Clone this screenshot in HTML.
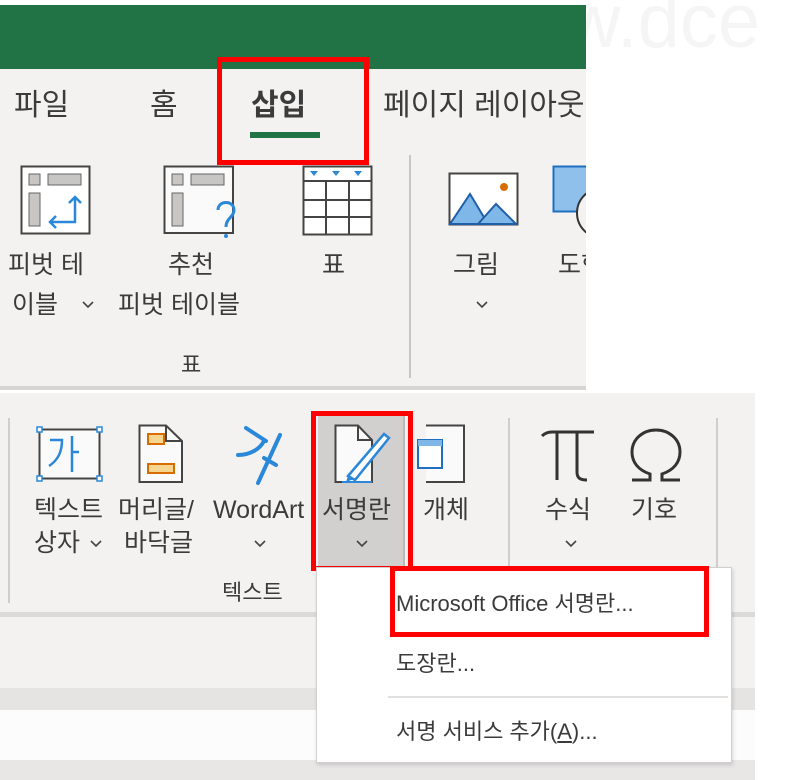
<!DOCTYPE html>
<html><head><meta charset="utf-8"><style>
*{margin:0;padding:0;box-sizing:border-box}
html,body{width:796px;height:780px;overflow:hidden}
body{background:#fff;position:relative;font-family:"Liberation Sans","Noto Sans CJK KR","NanumGothic",sans-serif;color:#3b3b3b}
.a{position:absolute}
.t{position:absolute;white-space:nowrap;font-size:25px;line-height:30px}
.red{position:absolute;border:5px solid #f00}
svg{position:absolute;overflow:visible}
.ch{position:absolute;width:12px;height:8px}
</style></head><body>
<div class="a" style="left:586px;top:0;width:210px;height:60px;overflow:hidden"><div class="a" style="left:-130px;top:-22px;font-size:76px;color:#f5f5f5">www.dce</div></div>
<!-- top screenshot -->
<div class="a" style="left:0;top:5px;width:586px;height:64px;background:#217346"></div>
<div class="a" style="left:0;top:69px;width:586px;height:320px;background:#f3f2f1"></div>
<div class="a" style="left:0;top:386px;width:586px;height:4px;background:#d6d5d4"></div>
<div class="t" style="left:14px;top:88px;font-size:30px;line-height:36px">파일</div>
<div class="t" style="left:150px;top:88px;font-size:30px;line-height:36px">홈</div>
<div class="t" style="left:251px;top:88px;font-size:30px;line-height:36px;font-weight:bold">삽입</div>
<div class="a" style="left:250px;top:132px;width:70px;height:6px;background:#217346"></div>
<div class="a" style="left:383px;top:88px;width:203px;height:40px;overflow:hidden"><div class="t" style="left:0;top:0;font-size:30px;line-height:36px">페이지 레이아웃</div></div>
<div class="red" style="left:217px;top:57px;width:152px;height:108px"></div>
<div class="a" style="left:409px;top:155px;width:2px;height:223px;background:#c8c6c4"></div>
<svg style="left:20px;top:165px" width="72" height="70"><rect x="1.5" y="1.5" width="68" height="67" fill="#fff" stroke="#444" stroke-width="2"/><rect x="9" y="9" width="11" height="11" fill="#c8c6c4" stroke="#666"/><rect x="28" y="9" width="33" height="11" fill="#c8c6c4" stroke="#666"/><rect x="9" y="28" width="11" height="33" fill="#c8c6c4" stroke="#666"/><path d="M55 32v25H30M49 38l6-6 6 6M36 51l-6 6 6 6" fill="none" stroke="#2b88d8" stroke-width="2.5"/></svg>
<svg style="left:163px;top:165px" width="80" height="75"><path d="M1.5 1.5H70V68H1.5Z" fill="#fafafa" stroke="#444" stroke-width="2"/><rect x="9" y="9" width="11" height="11" fill="#c8c6c4" stroke="#666"/><rect x="28" y="9" width="33" height="11" fill="#c8c6c4" stroke="#666"/><rect x="9" y="28" width="11" height="33" fill="#c8c6c4" stroke="#666"/><path d="M55 45c0-10 16-10 16 0 0 7-8 8-8 17" fill="none" stroke="#2b88d8" stroke-width="3"/><circle cx="63" cy="71" r="2" fill="#2b88d8"/></svg>
<svg style="left:302px;top:165px" width="72" height="72"><rect x="1.5" y="1.5" width="68" height="68" fill="#fff" stroke="#444" stroke-width="2"/><path d="M1 16H70M1 35H70M1 52H70M24 16V70M47 16V70" stroke="#444" stroke-width="2"/><path d="M8 6h8l-4 5zM30 6h8l-4 5zM52 6h8l-4 5z" fill="#2b88d8"/></svg>
<svg style="left:448px;top:172px" width="72" height="54"><rect x="1.5" y="1.5" width="68" height="51" fill="#fff" stroke="#444" stroke-width="2"/><path d="M2 52L22 22 40 52Z" fill="#7fb7e8" stroke="#1f5fa8" stroke-width="2"/><path d="M30 52L48 32 68 52Z" fill="#7fb7e8" stroke="#1f5fa8" stroke-width="2"/><circle cx="56" cy="15" r="4" fill="#d86c00"/></svg>
<div class="a" style="left:552px;top:160px;width:34px;height:80px;overflow:hidden"><svg style="left:0;top:5px" width="34" height="60"><rect x="1.5" y="1.5" width="40" height="45" fill="#8fc0ec" stroke="#1f6fc0" stroke-width="2"/><circle cx="50" cy="48" r="25" fill="#f3f2f1" stroke="#333" stroke-width="2"/></svg></div>
<div class="t" style="left:8px;top:250px">피벗 테</div>
<div class="t" style="left:12px;top:290px">이블</div>
<svg class="ch" style="left:82px;top:301px"><path d="M1 1l5 5 5-5" fill="none" stroke="#444" stroke-width="1.6"/></svg>
<div class="t" style="left:168px;top:250px">추천</div>
<div class="t" style="left:118px;top:290px">피벗 테이블</div>
<div class="t" style="left:322px;top:250px">표</div>
<div class="t" style="left:181px;top:350px;font-size:22px">표</div>
<div class="t" style="left:453px;top:250px">그림</div>
<svg class="ch" style="left:476px;top:301px"><path d="M1 1l5 5 5-5" fill="none" stroke="#444" stroke-width="1.6"/></svg>
<div class="a" style="left:558px;top:250px;width:28px;height:32px;overflow:hidden"><div class="t" style="left:0;top:0">도형</div></div>
<!-- bottom screenshot -->
<div class="a" style="left:0;top:393px;width:755px;height:222px;background:#f3f2f1"></div>
<div class="a" style="left:0;top:612px;width:755px;height:5px;background:#dcdad8"></div>
<div class="a" style="left:0;top:617px;width:755px;height:71px;background:#f3f2f1"></div>
<div class="a" style="left:0;top:688px;width:755px;height:22px;background:#e5e4e3"></div>
<div class="a" style="left:0;top:710px;width:755px;height:50px;background:#fcfcfc"></div>
<div class="a" style="left:0;top:760px;width:755px;height:20px;background:#e8e7e6"></div>
<div class="a" style="left:8px;top:418px;width:2px;height:185px;background:#d0cecc"></div>
<div class="a" style="left:508px;top:418px;width:2px;height:150px;background:#d0cecc"></div>
<div class="a" style="left:716px;top:418px;width:2px;height:150px;background:#d0cecc"></div>
<div class="a" style="left:318px;top:415px;width:87px;height:152px;background:#d2d0ce"></div>
<div class="a" style="left:403px;top:415px;width:2px;height:152px;background:#bcbab8"></div>
<svg style="left:38px;top:428px" width="64" height="72"><rect x="1.5" y="1.5" width="60" height="49" fill="#fafafa" stroke="#444" stroke-width="2"/><g fill="#fff" stroke="#2b88d8" stroke-width="1.5"><rect x="-1" y="-1" width="5" height="5"/><rect x="59" y="-1" width="5" height="5"/><rect x="-1" y="48" width="5" height="5"/><rect x="59" y="48" width="5" height="5"/></g><path d="M12 12h12c0 12-4 20-13 26M34 8v36M34 24h7" fill="none" stroke="#2b88d8" stroke-width="2.5"/></svg>
<svg style="left:138px;top:424px" width="46" height="60"><path d="M1.5 1.5H28L44 17V58H1.5Z" fill="#fafafa" stroke="#444" stroke-width="2"/><path d="M28 1.5V17H44" fill="none" stroke="#444" stroke-width="2"/><rect x="10" y="10" width="16" height="10" fill="#f6d58e" stroke="#d86c00" stroke-width="2"/><rect x="10" y="40" width="26" height="9" fill="#f6d58e" stroke="#d86c00" stroke-width="2"/></svg>
<svg style="left:234px;top:425px" width="56" height="60"><path d="M4 30c12 0 22-6 26-14M12 3l20 13M46 10L24 58M30 33l12 7" fill="none" stroke="#2b88d8" stroke-width="4" stroke-linecap="round"/></svg>
<svg style="left:334px;top:424px" width="60" height="60"><path d="M1.5 1.5H24L38 16V58H1.5Z" fill="#fafafa" stroke="#444" stroke-width="2"/><path d="M24 1.5V16H38" fill="none" stroke="#444" stroke-width="2"/><path d="M14 52L50 10l5 4-34 42z" fill="#fff" stroke="#2b88d8" stroke-width="2.5"/><path d="M14 52l-2 6 8-3z" fill="#2b88d8"/><path d="M8 58H38" stroke="#2b88d8" stroke-width="2"/></svg>
<svg style="left:416px;top:424px" width="52" height="60"><path d="M10 1.5H48V58H10" fill="#fafafa" stroke="#444" stroke-width="2"/><rect x="2" y="16" width="24" height="28" fill="#fff" stroke="#1f6fc0" stroke-width="2"/><rect x="2" y="16" width="24" height="6" fill="#7fb7e8"/></svg>
<svg style="left:540px;top:430px" width="56" height="52"><path d="M2 6c3-3 6-4 10-4h42M17 2v48M37 2v40c0 6 3 8 10 8" fill="none" stroke="#333" stroke-width="3"/></svg>
<svg style="left:628px;top:428px" width="56" height="54"><path d="M4 52h18v-6C10 42 4 34 4 24 4 11 15 2 28 2s24 9 24 22c0 10-6 18-18 22v6h18" fill="none" stroke="#333" stroke-width="3"/></svg>
<div class="t" style="left:34px;top:495px">텍스트</div>
<div class="t" style="left:34px;top:528px">상자</div>
<svg class="ch" style="left:90px;top:540px"><path d="M1 1l5 5 5-5" fill="none" stroke="#444" stroke-width="1.6"/></svg>
<div class="t" style="left:118px;top:495px">머리글/</div>
<div class="t" style="left:124px;top:528px">바닥글</div>
<div class="t" style="left:213px;top:495px">WordArt</div>
<svg class="ch" style="left:254px;top:540px"><path d="M1 1l5 5 5-5" fill="none" stroke="#444" stroke-width="1.6"/></svg>
<div class="t" style="left:322px;top:495px">서명란</div>
<svg class="ch" style="left:356px;top:540px"><path d="M1 1l5 5 5-5" fill="none" stroke="#444" stroke-width="1.6"/></svg>
<div class="t" style="left:423px;top:495px">개체</div>
<div class="t" style="left:545px;top:495px">수식</div>
<svg class="ch" style="left:565px;top:540px"><path d="M1 1l5 5 5-5" fill="none" stroke="#444" stroke-width="1.6"/></svg>
<div class="t" style="left:631px;top:495px">기호</div>
<div class="t" style="left:222px;top:578px;font-size:22px">텍스트</div>
<div class="red" style="left:311px;top:411px;width:102px;height:160px"></div>
<div class="a" style="left:316px;top:567px;width:416px;height:196px;background:#fff;border:1px solid #d0d0d0;box-shadow:1px 2px 4px rgba(0,0,0,.15)"></div>
<div class="a" style="left:388px;top:696px;width:340px;height:2px;background:#e1dfdd"></div>
<div class="t" style="left:396px;top:589px;font-size:22px">Microsoft Office 서명란...</div>
<div class="t" style="left:396px;top:649px;font-size:22px">도장란...</div>
<div class="t" style="left:396px;top:717px;font-size:22px">서명 서비스 추가(<u>A</u>)...</div>
<div class="red" style="left:390px;top:566px;width:319px;height:71px"></div>
</body></html>
